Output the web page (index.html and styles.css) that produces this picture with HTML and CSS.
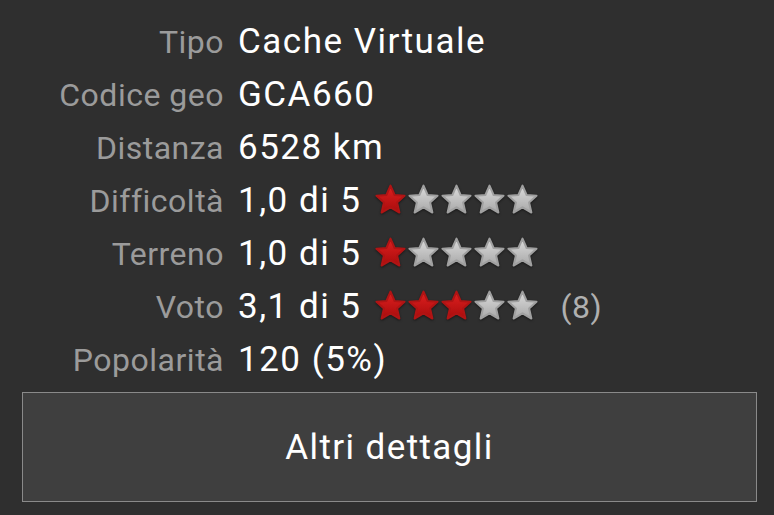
FILE: index.html
```html
<!DOCTYPE html>
<html>
<head>
<meta charset="utf-8">
<link rel="stylesheet" href="styles.css">
</head>
<body>
<svg width="0" height="0" style="position:absolute">
  <defs>
    <linearGradient id="gr" x1="0" y1="0" x2="0" y2="1">
      <stop offset="0" stop-color="#e02020"/>
      <stop offset="1" stop-color="#a80c0c"/>
    </linearGradient>
    <linearGradient id="gg" x1="0" y1="0" x2="0" y2="1">
      <stop offset="0" stop-color="#dcdcdc"/>
      <stop offset="1" stop-color="#a8a8a8"/>
    </linearGradient>
    <symbol id="star" viewBox="0 0 32 32">
      <path d="M16 2.5 L20 11.6 L29.6 12.4 L22.4 18.9 L24.6 28.6 L16 23.6 L7.4 28.6 L9.6 18.9 L2.4 12.4 L12 11.6 Z" stroke-linejoin="round" stroke-width="2"/>
    </symbol>
  </defs>
</svg>
<div class="panel">
  <div class="rows">
    <div class="row"><span class="label">Tipo</span><span class="value">Cache Virtuale</span></div>
    <div class="row"><span class="label">Codice geo</span><span class="value">GCA660</span></div>
    <div class="row"><span class="label">Distanza</span><span class="value">6528 km</span></div>
    <div class="row"><span class="label">Difficoltà</span><span class="value">1,0 di 5</span>
      <span class="stars">
        <svg class="star red"><use href="#star"/></svg><svg class="star grey"><use href="#star"/></svg><svg class="star grey"><use href="#star"/></svg><svg class="star grey"><use href="#star"/></svg><svg class="star grey"><use href="#star"/></svg>
      </span>
    </div>
    <div class="row"><span class="label">Terreno</span><span class="value">1,0 di 5</span>
      <span class="stars">
        <svg class="star red"><use href="#star"/></svg><svg class="star grey"><use href="#star"/></svg><svg class="star grey"><use href="#star"/></svg><svg class="star grey"><use href="#star"/></svg><svg class="star grey"><use href="#star"/></svg>
      </span>
    </div>
    <div class="row"><span class="label">Voto</span><span class="value">3,1 di 5</span>
      <span class="stars">
        <svg class="star red"><use href="#star"/></svg><svg class="star red"><use href="#star"/></svg><svg class="star red"><use href="#star"/></svg><svg class="star grey"><use href="#star"/></svg><svg class="star grey"><use href="#star"/></svg>
      </span>
      <span class="count">(8)</span>
    </div>
    <div class="row"><span class="label">Popolarità</span><span class="value">120 (5%)</span></div>
  </div>
  <div class="button">Altri dettagli</div>
</div>
</body>
</html>
```
FILE: styles.css
```css
html, body {
  margin: 0;
  padding: 0;
  background: #2f2f2f;
  width: 774px;
  height: 515px;
  overflow: hidden;
  font-family: Roboto, "Noto Sans", sans-serif;
}
.panel {
  padding: 15px 17px 0 22px;
}
.rows {
  display: flex;
  flex-direction: column;
}
.row {
  display: flex;
  align-items: center;
  height: 53px;
}
.label {
  width: 202px;
  text-align: right;
  color: #9b9b9b;
  font-size: 32px;
  letter-spacing: 0.5px;
  padding-right: 14px;
  flex: none;
}
.value {
  color: #ffffff;
  font-size: 35px;
  letter-spacing: 1.5px;
}
.stars {
  display: flex;
  margin-left: 12px;
  margin-top: -2px;
}
.star {
  width: 33px;
  height: 33px;
  filter: drop-shadow(0 1px 1px rgba(0,0,0,0.5));
}
.star.red { fill: url(#gr); stroke: #b01414; }
.star.grey { fill: url(#gg); stroke: #a0a0a0; }
.count {
  color: #b0b0b0;
  font-size: 32px;
  letter-spacing: 0.5px;
  margin-left: 22px;
}
.button {
  margin-top: 6px;
  height: 110px;
  box-sizing: border-box;
  border: 1px solid #8a8a8a;
  background: #3f3f3f;
  color: #ffffff;
  font-size: 35px;
  letter-spacing: 1.4px;
  display: flex;
  align-items: center;
  justify-content: center;
}
```
